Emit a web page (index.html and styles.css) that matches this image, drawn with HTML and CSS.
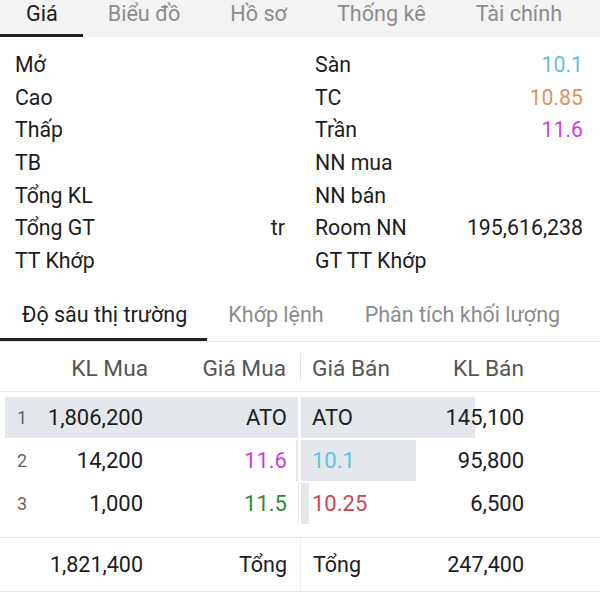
FILE: index.html
```html
<!DOCTYPE html>
<html lang="vi">

<head>
    <meta charset="UTF-8">
    <meta name="viewport" content="width=device-width, initial-scale=1.0">
    <title>Giá</title>
    <link rel="stylesheet" href="styles.css">
</head>

<body>
    <div class="tabs top-tabs">
        <div class="tab active">Giá</div>
        <div class="tab">Biểu đồ</div>
        <div class="tab">Hồ sơ</div>
        <div class="tab">Thống kê</div>
        <div class="tab">Tài chính</div>
    </div>

    <div class="info">
        <div class="info-col">
            <div class="info-row"><span>Mở</span><span></span></div>
            <div class="info-row"><span>Cao</span><span></span></div>
            <div class="info-row"><span>Thấp</span><span></span></div>
            <div class="info-row"><span>TB</span><span></span></div>
            <div class="info-row"><span>Tổng KL</span><span></span></div>
            <div class="info-row"><span>Tổng GT</span><span>tr</span></div>
            <div class="info-row"><span>TT Khớp</span><span></span></div>
        </div>
        <div class="info-col">
            <div class="info-row"><span>Sàn</span><span class="floor">10.1</span></div>
            <div class="info-row"><span>TC</span><span class="ref">10.85</span></div>
            <div class="info-row"><span>Trần</span><span class="ceil">11.6</span></div>
            <div class="info-row"><span>NN mua</span><span></span></div>
            <div class="info-row"><span>NN bán</span><span></span></div>
            <div class="info-row"><span>Room NN</span><span>195,616,238</span></div>
            <div class="info-row"><span>GT TT Khớp</span><span></span></div>
        </div>
    </div>

    <div class="tabs sub-tabs">
        <div class="tab active">Độ sâu thị trường</div>
        <div class="tab">Khớp lệnh</div>
        <div class="tab">Phân tích khối lượng</div>
    </div>

    <div class="book">
        <div class="book-head">
            <div class="half buy">
                <span class="idx"></span>
                <span class="vol">KL Mua</span>
                <span class="px">Giá Mua</span>
            </div>
            <div class="half sell">
                <span class="px">Giá Bán</span>
                <span class="vol">KL Bán</span>
            </div>
        </div>

        <div class="levels">
            <div class="level">
                <div class="half buy">
                    <span class="bar-track"><span class="bar" style="width: 99.2%"></span></span>
                    <span class="idx">1</span>
                    <span class="vol">1,806,200</span>
                    <span class="px">ATO</span>
                </div>
                <div class="half sell">
                    <span class="bar-track"><span class="bar" style="width: 58.7%"></span></span>
                    <span class="px">ATO</span>
                    <span class="vol">145,100</span>
                </div>
            </div>
            <div class="level">
                <div class="half buy">
                    <span class="bar-track"><span class="bar" style="width: 0.8%"></span></span>
                    <span class="idx">2</span>
                    <span class="vol">14,200</span>
                    <span class="px ceil">11.6</span>
                </div>
                <div class="half sell">
                    <span class="bar-track"><span class="bar" style="width: 38.7%"></span></span>
                    <span class="px floor">10.1</span>
                    <span class="vol">95,800</span>
                </div>
            </div>
            <div class="level">
                <div class="half buy">
                    <span class="bar-track"><span class="bar" style="width: 0.05%"></span></span>
                    <span class="idx">3</span>
                    <span class="vol">1,000</span>
                    <span class="px up">11.5</span>
                </div>
                <div class="half sell">
                    <span class="bar-track"><span class="bar" style="width: 2.6%"></span></span>
                    <span class="px down">10.25</span>
                    <span class="vol">6,500</span>
                </div>
            </div>
        </div>

        <div class="book-total">
            <div class="half buy">
                <span class="idx"></span>
                <span class="vol">1,821,400</span>
                <span class="px">Tổng</span>
            </div>
            <div class="half sell">
                <span class="px">Tổng</span>
                <span class="vol">247,400</span>
            </div>
        </div>
    </div>
</body>

</html>
```

FILE: styles.css
```css
body {
    margin: 0;
    background: #fff;
    color: #1c1c1c;
    font-family: Roboto, "Noto Sans", sans-serif;
    overflow: hidden;
}

/* tab bars */
.tabs {
    display: flex;
}

.tab {
    line-height: 28px;
    color: #8c8c8c;
    border-bottom: 3px solid transparent;
    white-space: nowrap;
}

.tab.active {
    color: #1c1c1c;
    border-bottom-color: #222;
}

.top-tabs {
    background: #f3f3f3;
    height: 37px;
    font-size: 21.6px;
}

.top-tabs .tab {
    padding: 0 25px 4px 25px;
}

.top-tabs .tab:first-child {
    padding-left: 26px;
}

.sub-tabs {
    margin-top: 23px;
    border-bottom: 1px solid #e8e8e8;
    font-size: 21.5px;
}

.sub-tabs .tab {
    padding: 0 20px 9px 21px;
}

.sub-tabs .tab:first-child {
    padding-left: 22px;
}

/* price info */
.info {
    display: grid;
    grid-template-columns: 270px 268px;
    column-gap: 30px;
    padding: 12px 17px 0 15px;
    font-size: 21.3px;
}

.info-row {
    display: flex;
    justify-content: space-between;
    line-height: 32.67px;
    height: 32.67px;
}

.floor {
    color: #62c1de;
}

.ref {
    color: #e2905e;
}

.ceil {
    color: #d23cd6;
}

.up {
    color: #2f8a35;
}

.down {
    color: #c84a55;
}

/* order book */
.book {
    font-size: 22px;
}

.book-head,
.level,
.book-total {
    display: flex;
}

.half {
    width: 300px;
    display: flex;
    align-items: center;
    position: relative;
}

.half span {
    position: relative;
}

.idx {
    width: 23px;
    padding-left: 17px;
    font-size: 18px;
    color: #666;
}

.buy .vol {
    width: 103px;
    text-align: right;
}

.buy .px {
    flex: 1;
    text-align: right;
    padding-right: 13px;
}

.sell .px {
    padding-left: 12px;
}

.sell .vol {
    flex: 1;
    text-align: right;
    padding-right: 76px;
}

.book-head {
    height: 45px;
    padding-top: 4px;
    border-bottom: 1px solid #efefef;
    font-size: 22.7px;
    color: #555;
}

.book-head .buy .vol {
    width: 108px;
}

.book-head .buy .px {
    padding-right: 14px;
}

.book-head .sell::before {
    content: "";
    position: absolute;
    left: 0;
    top: 7px;
    height: 27px;
    border-left: 1px solid #e6e6e6;
}

.levels {
    margin-top: 4px;
}

.level {
    height: 43px;
}

.level .half span.bar-track {
    position: absolute;
    top: 1px;
    bottom: 1px;
    display: flex;
}

.buy .bar-track {
    left: 3px;
    right: 2px;
    justify-content: flex-end;
}

.sell .bar-track {
    left: 1px;
    right: 2px;
}

.bar-track .bar {
    background: #e4e8ec;
    height: 100%;
}

.book-total {
    margin-top: 12px;
    height: 53px;
    border-top: 1px solid #e9e9e9;
    border-bottom: 1px solid #e9e9e9;
    font-size: 21.5px;
}

.book-total .sell {
    border-left: 1px solid #eeeeee;
    width: 299px;
}
```
